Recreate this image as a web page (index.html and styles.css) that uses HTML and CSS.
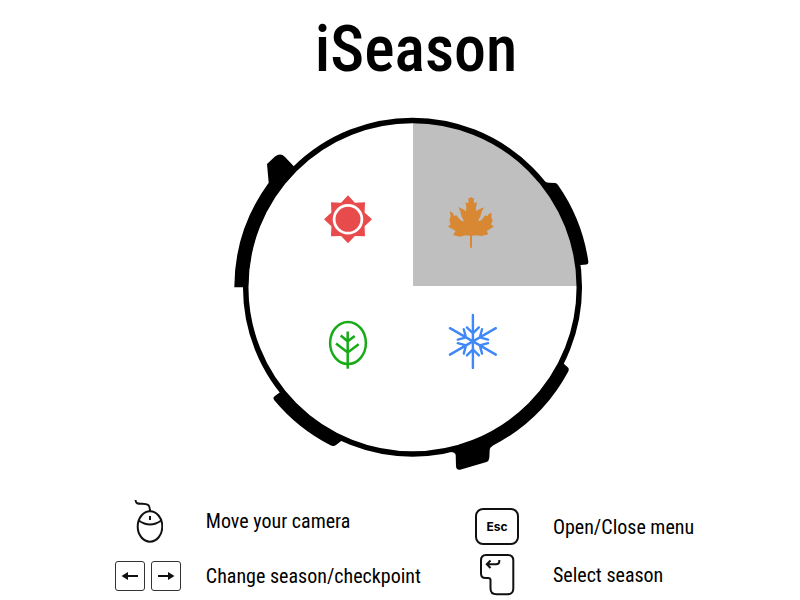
FILE: index.html
```
<!DOCTYPE html>
<html lang="en">
<head>
<meta charset="utf-8">
<meta name="viewport" content="width=device-width, initial-scale=1">
<title>iSeason</title>
<link rel="stylesheet" href="styles.css">
</head>
<body>
<main class="page">
  <h1 class="title">iSeason</h1>

  <svg class="wheel" viewBox="230 114 364 360" role="img" aria-label="Season wheel, autumn selected">
    <path class="selected" d="M413 120 A167 167 0 0 1 579 286 H413 Z"/>
    <circle class="ring" cx="412.5" cy="287.2" r="166.8"/>
    <g class="clamps">
      <path d="M248 287.3 H234.3 A178 178 0 0 1 268.7 182.7 L267 164 L275 156.5 Q280.5 152.500 285 157 L294 166.500 L291 176 A164 164 0 0 0 248 287.300 Z"/>
      <path d="M544 181 Q546 182.700 549 182.700 L555.500 183 Q557 183.300 558 185 A178 178 0 0 1 588.400 262 Q588.500 264.300 586.500 264.500 L578 265.300 A167 167 0 0 0 542 185 Z"/>
      <path d="M281 391.500 L274.300 396.500 Q272.500 398 274.500 400.500 A179 179 0 0 0 330 445 Q333.500 447 336 445 L342.500 440 L340 435 A165 165 0 0 1 284 390 Z"/>
      <path d="M562.500 362 Q563.500 363.800 568 367.500 Q569.500 369 568 372 A178 178 0 0 1 493 445.500 Q489.800 447.500 489.700 450 L489.300 458 Q489 461 486.500 462 L461 469.500 Q456 470.500 456 466 L455.700 455 Q455 451.500 449 452 L449 449 A165 165 0 0 0 557 366 Z"/>
    </g>

    <g class="summer">
      <path d="M348 195.300 L354.900 202.700 L365 202.300 L364.600 212.400 L372 219.300 L364.600 226.200 L365 236.300 L354.900 235.900 L348 243.300 L341.100 235.900 L331 236.300 L331.400 226.200 L324 219.300 L331.400 212.400 L331 202.300 L341.100 202.700 Z"/>
      <circle class="halo" cx="348" cy="219.300" r="13.900"/>
    </g>

    <path class="autumn" transform="translate(410 110) scale(.33333)" d="M183 260 L187 265 L192 264 L191 275 L194 280 L201 276 L198 292 L199 304 L209 297 L222 292 L215 306 L211 320 L204 332 L210 333 L218 326 L225 316 L232 319 L236 312 L245 308 L244 322 L248 331 L243 343 L251 350 L240 357 L230 363 L235 373 L215 378 L200 376 L186 377 V413 H180 V377 L166 376 L150 380 L129 375 L137 363 L126 356 L114 350 L122 343 L118 331 L122 319 L120 303 L129 310 L132 318 L139 316 L148 327 L156 334 L162 332 L155 320 L151 304 L145 291 L158 297 L168 304 L169 292 L166 277 L173 280 L176 275 L175 264 L180 265 Z"/>

    <g class="spring">
      <ellipse cx="348" cy="343" rx="17.900" ry="21"/>
      <path d="M347.700 331.500 V368.700 M336 343.500 L347.700 352.500 L358.700 344.300 M340.700 335.500 L347.700 341.300 L354.700 336"/>
    </g>

    <g class="winter" transform="translate(472.900 341.400)">
      <path id="arm" d="M0 0 V-26.500 M-6 -14 L0 -8 L6 -14"/>
      <use href="#arm" transform="rotate(60)"/>
      <use href="#arm" transform="rotate(120)"/>
      <use href="#arm" transform="rotate(180)"/>
      <use href="#arm" transform="rotate(240)"/>
      <use href="#arm" transform="rotate(300)"/>
    </g>
  </svg>

  <div class="controls">
    <dl class="list list-left">
      <div class="item">
        <dt class="input">
          <svg class="mouse" viewBox="132 499 30 44" role="img" aria-label="Mouse">
            <path d="M134.500 500 C135 504 137 503.700 141 503.700 C147 503.700 149 505 149 511"/>
            <ellipse cx="149" cy="526.500" rx="12.300" ry="15.200"/>
            <path d="M137.700 520.500 Q149 528.500 160.300 520.500 M149 516 V520"/>
          </svg>
        </dt>
        <dd class="action">Move your camera</dd>
      </div>
      <div class="item">
        <dt class="input">
          <kbd class="key arrow"><svg viewBox="0 0 28 28" role="img" aria-label="Left arrow"><path d="M10 14 H22"/><path class="head" d="M5.500 14 L12 10 V18 Z"/></svg></kbd>
          <kbd class="key arrow"><svg viewBox="0 0 28 28" role="img" aria-label="Right arrow"><path d="M6 14 H18"/><path class="head" d="M22.500 14 L16 10 V18 Z"/></svg></kbd>
        </dt>
        <dd class="action">Change season/checkpoint</dd>
      </div>
    </dl>

    <dl class="list list-right">
      <div class="item">
        <dt class="input"><kbd class="key esc">Esc</kbd></dt>
        <dd class="action">Open/Close menu</dd>
      </div>
      <div class="item">
        <dt class="input">
          <svg class="enter" viewBox="479 552 36 43" role="img" aria-label="Enter">
            <path d="M486 554 H508 Q513.300 554 513.300 559.500 V587.500 Q513.300 593.300 507.500 593.300 H496.500 Q490.500 593.300 490.500 587.500 V579 Q490.500 577 488 577 H485.500 Q481 577 481 572.500 V559.500 Q481 554 486 554 Z"/>
            <path d="M499.300 559 V560.500 Q499.300 563.200 496 563.200 H487 M490.500 559.500 L486.800 563.200 L490.500 567"/>
          </svg>
        </dt>
        <dd class="action">Select season</dd>
      </div>
    </dl>
  </div>
</main>
</body>
</html>
```
FILE: styles.css
```
* {
  box-sizing: border-box;
}

body {
  margin: 0;
  background: #fff;
  color: #000;
  font-family: "Roboto Condensed", "Liberation Sans Narrow", "Liberation Sans", sans-serif;
}

.page {
  display: flex;
  flex-direction: column;
  align-items: center;
}

.title {
  margin: 0;
  padding: 12px 0 0 32px;
  font-size: 64px;
  line-height: 76px;
  font-weight: 500;
}

.wheel {
  display: block;
  width: 100%;
  max-width: 364px;
  margin: 26px 0 0 24px;
}

.selected {
  fill: #bfbfbf;
}

.ring {
  fill: none;
  stroke: #000;
  stroke-width: 5.5;
}

.summer {
  fill: #e84b4b;
}

.halo {
  fill: none;
  stroke: #fff;
  stroke-width: 2.8;
}

.autumn {
  fill: #d88733;
}

.spring {
  fill: none;
  stroke: #18ab18;
  stroke-width: 2.5;
}

.winter {
  fill: none;
  stroke: #4088f8;
  stroke-width: 2.4;
  stroke-linecap: round;
}

.controls {
  display: flex;
  justify-content: center;
  gap: 54px;
  margin-top: 25px;
  padding-left: 8px;
}

.list {
  display: flex;
  flex-direction: column;
  margin: 0;
}

.list-left {
  gap: 18px;
}

.list-right {
  gap: 8px;
  padding-top: 9px;
}

.item {
  display: flex;
  align-items: center;
}

.input {
  display: flex;
  justify-content: center;
  gap: 6px;
}

.list-left .input {
  width: 68px;
  margin-right: 24px;
}

.list-right .input {
  width: 44px;
  margin-right: 34px;
}

.action {
  margin: 0;
  font-size: 20px;
  line-height: 24px;
  white-space: nowrap;
}

.mouse,
.enter {
  display: block;
  fill: none;
  stroke: #111;
  stroke-width: 2;
}

.mouse {
  width: 30px;
  height: 44px;
}

.enter {
  width: 36px;
  height: 43px;
}

.key {
  display: flex;
  align-items: center;
  justify-content: center;
}

.arrow {
  width: 30px;
  height: 30px;
  border: 1px solid #333;
  border-radius: 3px;
}

.arrow svg {
  width: 28px;
  height: 28px;
  stroke: #111;
  stroke-width: 2;
}

.arrow .head {
  fill: #111;
  stroke: none;
}

.esc {
  width: 44px;
  height: 37px;
  border: 2px solid #111;
  border-radius: 8px;
  font: 700 12px/16px Inter, sans-serif;
}
```
